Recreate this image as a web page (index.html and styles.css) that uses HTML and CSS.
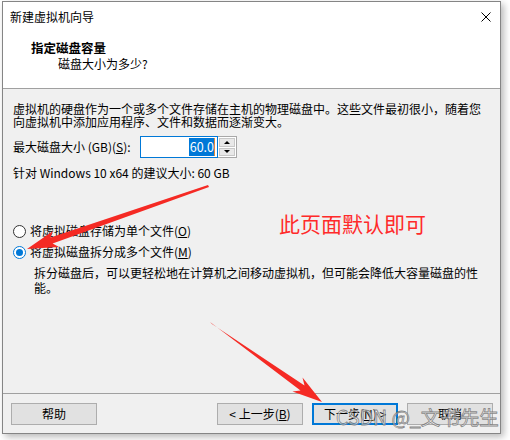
FILE: index.html
```html
<!DOCTYPE html>
<html lang="zh-CN">
<head>
<meta charset="utf-8">
<title>新建虚拟机向导</title>
<link rel="stylesheet" href="styles.css">
</head>
<body>
<div class="window">
  <div class="titlebar">
    <span class="title">新建虚拟机向导</span>
    <svg class="close" width="10" height="10" viewBox="0 0 10 10"><path d="M0.5 0.5 L9.5 9.5 M9.5 0.5 L0.5 9.5" stroke="#000" stroke-width="1" fill="none"/></svg>
  </div>
  <div class="header">
    <div class="h-title">指定磁盘容量</div>
    <div class="h-sub">磁盘大小为多少?</div>
  </div>
  <div class="content">
    <p class="intro">虚拟机的硬盘作为一个或多个文件存储在主机的物理磁盘中。这些文件最初很小，随着您向虚拟机中添加应用程序、文件和数据而逐渐变大。</p>
    <div class="size-row">
      <span class="size-label">最大磁盘大小 (GB)(<u>S</u>):</span>
      <div class="spin">
        <div class="spin-input"><span class="sel">60.0</span><span class="caret"></span></div>
        <div class="spin-btns">
          <div class="spin-btn"><span class="tri-up"></span></div>
          <div class="spin-btn"><span class="tri-down"></span></div>
        </div>
      </div>
    </div>
    <p class="rec">针对 Windows 10 x64 的建议大小: 60 GB</p>
    <div class="radio-row first">
      <span class="radio"></span>
      <span>将虚拟磁盘存储为单个文件(<u>O</u>)</span>
    </div>
    <div class="radio-row">
      <span class="radio checked"><span class="dot"></span></span>
      <span>将虚拟磁盘拆分成多个文件(<u>M</u>)</span>
    </div>
    <p class="desc">拆分磁盘后，可以更轻松地在计算机之间移动虚拟机，但可能会降低大容量磁盘的性能。</p>
  </div>
  <div class="footer">
    <button class="btn help">帮助</button>
    <button class="btn">&lt; 上一步(<u>B</u>)</button>
    <button class="btn default">下一步(<u>N</u>) &gt;</button>
    <button class="btn">取消</button>
  </div>
</div>

<div class="note">此页面默认即可</div>
<svg class="arrows" width="510" height="440" viewBox="0 0 510 440">
  <polygon fill="#f52a24" points="208,185 209,187 52.6,243.4 59,247 27,249 53,231 50.6,237.6"/>
  <polygon fill="#f52a24" points="210,322 212,324 304.5,385.5 302.5,377.5 322,402 292.5,391.5 300.5,390.5"/>
</svg>
<div class="watermark">CSDN @_文书先生</div>
</body>
</html>
```

FILE: styles.css
```css
html, body {
  margin: 0;
  padding: 0;
}
body {
  position: relative;
  width: 510px;
  height: 440px;
  overflow: hidden;
  background: #ffffff;
  font-family: "Noto Sans CJK SC", "Noto Sans", sans-serif;
  font-size: 12px;
  color: #000;
}
u { text-decoration: underline; text-underline-offset: 1px; }

.window {
  box-sizing: border-box;
  margin: 1px 0 0 2px;
  width: 499px;
  height: 433px;
  border: 1px solid #858585;
  background: #f0f0f0;
  display: flex;
  flex-direction: column;
  box-shadow: 3px 3px 7px rgba(0, 0, 0, 0.28);
}

.titlebar {
  height: 29px;
  flex: none;
  background: #fff;
  display: flex;
  align-items: center;
  justify-content: space-between;
  padding: 0 9px 0 7px;
}
.title { line-height: 16px; }
.close { display: block; }

.header {
  box-sizing: border-box;
  height: 58px;
  flex: none;
  background: #fff;
  border-bottom: 1px solid #a0a0a0;
  padding: 8px 0 0 28px;
}
.h-title {
  font-weight: bold;
  font-size: 12.5px;
  line-height: 17px;
}
.h-sub {
  line-height: 16px;
  padding-left: 27px;
}

.content {
  flex: 1;
  padding: 13px 0 0 10px;
}
.intro {
  margin: 0;
  width: 474px;
  line-height: 13px;
}
.size-row {
  margin-top: 8px;
  display: flex;
  align-items: center;
  height: 22px;
}
.size-label {
  width: 127px;
  line-height: 14px;
}
.spin {
  display: flex;
  height: 22px;
}
.spin-input {
  box-sizing: border-box;
  width: 78px;
  height: 22px;
  background: #fff;
  border: 1px solid #0078d7;
  display: flex;
  align-items: center;
  justify-content: flex-end;
  padding-right: 2px;
}
.sel {
  background: #0078d7;
  color: #fff;
  line-height: 18px;
  font-size: 12.5px;
  padding: 0 0 0 1px;
}
.caret {
  width: 1px;
  height: 18px;
  background: #e08a3a;
}
.spin-btns {
  box-sizing: border-box;
  width: 19px;
  height: 22px;
  border: 1px solid #a8a8a8;
  border-left: none;
  display: flex;
  flex-direction: column;
  background: #fff;
  padding: 1px;
  gap: 1px;
}
.spin-btn {
  flex: 1;
  background: #e8e8e8;
  border: 1px solid #c8c8c8;
  display: flex;
  align-items: center;
  justify-content: center;
}
.tri-up {
  width: 0; height: 0;
  border-left: 3px solid transparent;
  border-right: 3px solid transparent;
  border-bottom: 3px solid #000;
}
.tri-down {
  width: 0; height: 0;
  border-left: 3px solid transparent;
  border-right: 3px solid transparent;
  border-top: 3px solid #000;
}
.rec {
  margin: 8px 0 0 0;
  line-height: 14px;
}

.radio-row {
  display: flex;
  align-items: center;
  height: 16px;
  margin-top: 5px;
  gap: 4px;
  line-height: 16px;
}
.radio-row.first { margin-top: 43px; }
.radio {
  box-sizing: border-box;
  width: 13px;
  height: 13px;
  border: 1px solid #333;
  border-radius: 50%;
  background: #fff;
  display: flex;
  align-items: center;
  justify-content: center;
}
.radio.checked { border-color: #0078d7; }
.dot {
  width: 7px;
  height: 7px;
  border-radius: 50%;
  background: #0078d7;
}
.desc {
  margin: 5px 0 0 21px;
  width: 452px;
  line-height: 15px;
}

.footer {
  box-sizing: border-box;
  height: 40px;
  flex: none;
  border-top: 1px solid #a0a0a0;
  padding: 9px 7px 0 8px;
  display: flex;
  align-items: flex-start;
  gap: 9px;
}
.btn {
  box-sizing: border-box;
  width: 86px;
  height: 22px;
  margin: 0;
  padding: 0;
  background: #e1e1e1;
  border: 1px solid #adadad;
  font-family: "Noto Sans CJK SC", "Noto Sans", sans-serif;
  font-size: 12px;
  line-height: 18px;
  color: #000;
}
.btn.help { margin-right: auto; }
.btn.default { border: 2px solid #0078d7; }

.note {
  position: absolute;
  left: 279px;
  top: 211px;
  font-size: 21px;
  line-height: 24px;
  color: #ff2a2a;
  white-space: nowrap;
}
.arrows {
  position: absolute;
  left: 0;
  top: 0;
  pointer-events: none;
}
.watermark {
  position: absolute;
  left: 336px;
  top: 404px;
  font-size: 19.5px;
  line-height: 26px;
  white-space: nowrap;
  color: rgba(255, 255, 255, 0.6);
  -webkit-text-stroke: 0.8px rgba(105, 105, 105, 0.8);
}
```
